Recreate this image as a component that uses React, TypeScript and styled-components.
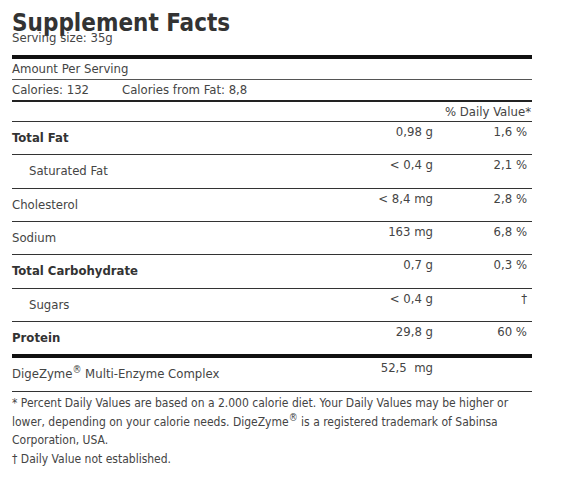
import React from "react";
import styled, { createGlobalStyle } from "styled-components";

const GlobalStyle = createGlobalStyle`
  html, body { margin: 0; padding: 0; background: #fff; }
  body {
    font-family: "DejaVu Sans Condensed", "DejaVu Sans", Verdana, sans-serif;
    color: #444;
  }
`;

const Panel = styled.section`
  width: 520px;
  padding: 11px 0 0 12px;
`;

const Title = styled.h1`
  margin: 2px 0 0;
  font-size: 24px;
  line-height: 20px;
  font-weight: bold;
  color: #333;
`;

const Serving = styled.div`
  font-size: 13px;
  line-height: 10px;
  padding-bottom: 12px;
`;

const Table = styled.div`
  border-top: 4px solid #111;
  font-size: 13px;
`;

const PlainRow = styled.div`
  height: 20px;
  line-height: 20px;
  border-bottom: 1px solid #555;
`;

const CaloriesRow = styled.div`
  display: flex;
  height: 20px;
  line-height: 20px;
  border-bottom: 2px solid #222;
`;

const CaloriesItem = styled.span<{ $width?: number }>`
  width: ${(p) => (p.$width ? `${p.$width}px` : "auto")};
  flex: none;
`;

const HeaderRow = styled.div`
  height: 19px;
  line-height: 19px;
  text-align: right;
  padding-right: 1px;
  border-bottom: 1px solid #333;
`;

const NutrientRow = styled.div<{ $heavy?: boolean }>`
  display: grid;
  grid-template-columns: 1fr 100px 99px;
  height: 32.33px;
  border-bottom: ${(p) => (p.$heavy ? "4px solid #111" : "1px solid #333")};
`;

const NameCell = styled.div<{ $bold?: boolean; $indent?: boolean }>`
  align-self: center;
  font-weight: ${(p) => (p.$bold ? "bold" : "normal")};
  color: ${(p) => (p.$bold ? "#333" : "#444")};
  padding-left: ${(p) => (p.$indent ? "17px" : "0")};
  line-height: 16px;
`;

const AmountCell = styled.div`
  align-self: start;
  line-height: 20px;
  text-align: right;
  white-space: pre;
`;

const DVCell = styled.div`
  align-self: start;
  line-height: 20px;
  text-align: right;
  padding-right: 5px;
`;

const Reg = styled.sup`
  font-size: 10px;
  line-height: 0;
  vertical-align: 5px;
`;

const Footer = styled.div`
  font-size: 12px;
  line-height: 18.5px;
  padding-top: 2.5px;
  color: #444;
`;

type Nutrient = {
  name: string;
  amount: string;
  dv: string;
  bold?: boolean;
  indent?: boolean;
};

const nutrients: Nutrient[] = [
  { name: "Total Fat", amount: "0,98 g", dv: "1,6 %", bold: true },
  { name: "Saturated Fat", amount: "< 0,4 g", dv: "2,1 %", indent: true },
  { name: "Cholesterol", amount: "< 8,4 mg", dv: "2,8 %" },
  { name: "Sodium", amount: "163 mg", dv: "6,8 %" },
  { name: "Total Carbohydrate", amount: "0,7 g", dv: "0,3 %", bold: true },
  { name: "Sugars", amount: "< 0,4 g", dv: "†", indent: true },
  { name: "Protein", amount: "29,8 g", dv: "60 %", bold: true },
];

export default function App() {
  return (
    <>
      <GlobalStyle />
      <Panel>
        <Title>Supplement Facts</Title>
        <Serving>Serving size: 35g</Serving>
        <Table>
          <PlainRow>Amount Per Serving</PlainRow>
          <CaloriesRow>
            <CaloriesItem $width={110}>Calories: 132</CaloriesItem>
            <CaloriesItem>Calories from Fat: 8,8</CaloriesItem>
          </CaloriesRow>
          <HeaderRow>% Daily Value*</HeaderRow>
          {nutrients.map((n, i) => (
            <NutrientRow key={n.name} $heavy={i === nutrients.length - 1}>
              <NameCell $bold={n.bold} $indent={n.indent}>
                {n.name}
              </NameCell>
              <AmountCell>{n.amount}</AmountCell>
              <DVCell>{n.dv}</DVCell>
            </NutrientRow>
          ))}
          <NutrientRow>
            <NameCell>
              DigeZyme<Reg>®</Reg> Multi-Enzyme Complex
            </NameCell>
            <AmountCell>{"52,5  mg"}</AmountCell>
            <DVCell />
          </NutrientRow>
        </Table>
        <Footer>
          * Percent Daily Values are based on a 2.000 calorie diet. Your Daily
          Values may be higher or lower, depending on your calorie needs.
          DigeZyme<Reg>®</Reg> is a registered trademark of Sabinsa Corporation,
          USA.
          <br />† Daily Value not established.
        </Footer>
      </Panel>
    </>
  );
}
